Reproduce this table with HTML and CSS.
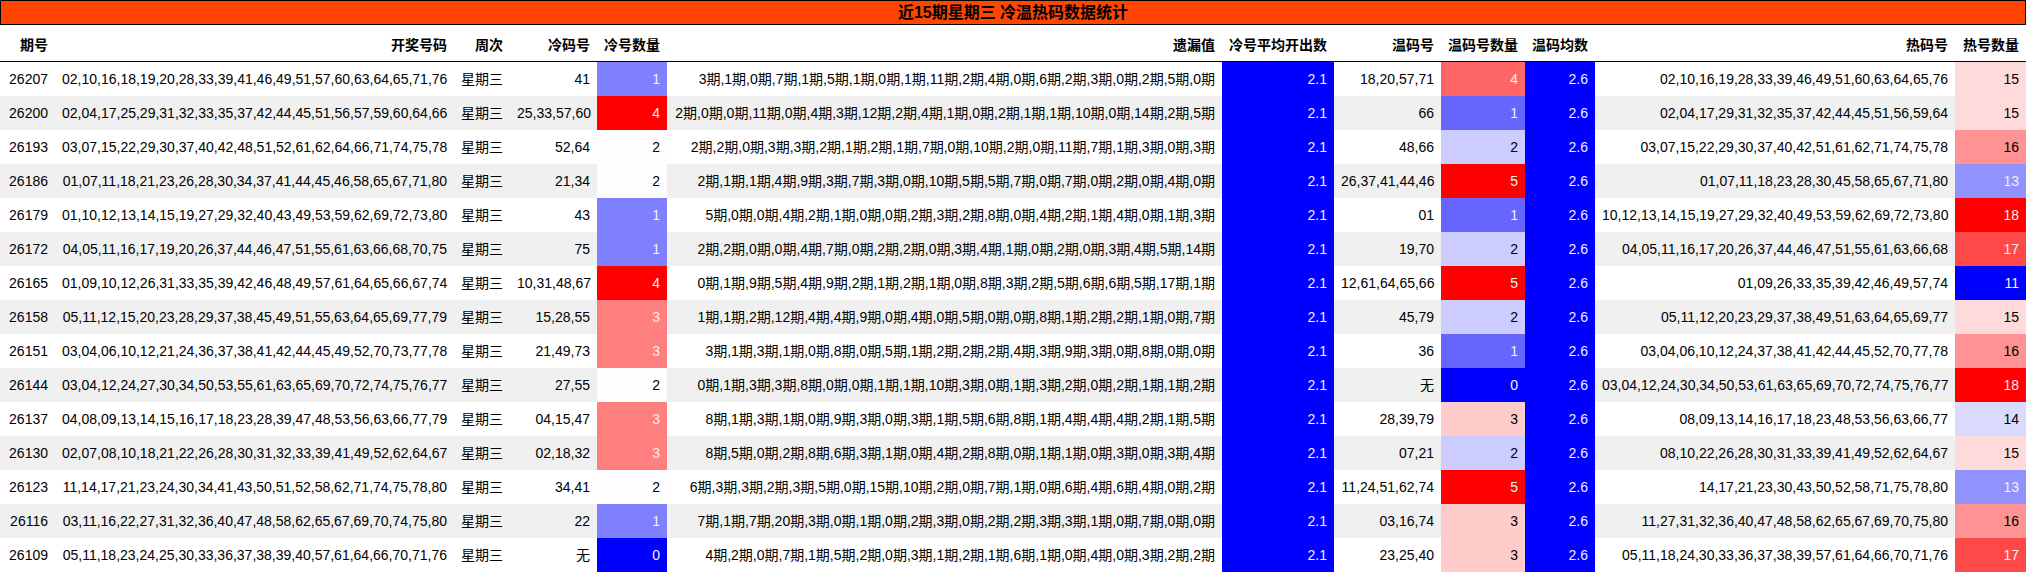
FILE: index.html
```html
<!DOCTYPE html>
<html lang="zh-CN">
<head>
<meta charset="utf-8">
<title>近15期星期三 冷温热码数据统计</title>
<link rel="stylesheet" href="styles.css">
</head>
<body>
<div class="report">
  <div class="title">近15期星期三 冷温热码数据统计</div>
  <table class="stats">
    <colgroup>
      <col class="w-issue"><col class="w-draw"><col class="w-week"><col class="w-cold"><col class="w-num70">
      <col class="w-miss"><col class="w-avg"><col class="w-warm"><col class="w-warmcnt"><col class="w-num70">
      <col class="w-hot"><col class="w-hotcnt">
    </colgroup>
    <thead>
      <tr>
        <th>期号</th><th>开奖号码</th><th>周次</th><th>冷码号</th><th>冷号数量</th><th>遗漏值</th>
        <th>冷号平均开出数</th><th>温码号</th><th>温码号数量</th><th>温码均数</th><th>热码号</th><th>热号数量</th>
      </tr>
    </thead>
    <tbody>
      <tr>
        <td>26207</td><td>02,10,16,18,19,20,28,33,39,41,46,49,51,57,60,63,64,65,71,76</td><td>星期三</td><td>41</td>
        <td class="lt" style="background:#8080ff">1</td>
        <td>3期,1期,0期,7期,1期,5期,1期,0期,1期,11期,2期,4期,0期,6期,2期,3期,0期,2期,5期,0期</td>
        <td class="lt" style="background:#0000ff">2.1</td><td>18,20,57,71</td>
        <td class="lt" style="background:#ff6666">4</td>
        <td class="lt" style="background:#0000ff">2.6</td>
        <td>02,10,16,19,28,33,39,46,49,51,60,63,64,65,76</td>
        <td style="background:#ffdada">15</td>
      </tr>
      <tr>
        <td>26200</td><td>02,04,17,25,29,31,32,33,35,37,42,44,45,51,56,57,59,60,64,66</td><td>星期三</td><td>25,33,57,60</td>
        <td class="lt" style="background:#ff0000">4</td>
        <td>2期,0期,0期,11期,0期,4期,3期,12期,2期,4期,1期,0期,2期,1期,1期,10期,0期,14期,2期,5期</td>
        <td class="lt" style="background:#0000ff">2.1</td><td>66</td>
        <td class="lt" style="background:#6666ff">1</td>
        <td class="lt" style="background:#0000ff">2.6</td>
        <td>02,04,17,29,31,32,35,37,42,44,45,51,56,59,64</td>
        <td style="background:#ffdada">15</td>
      </tr>
      <tr>
        <td>26193</td><td>03,07,15,22,29,30,37,40,42,48,51,52,61,62,64,66,71,74,75,78</td><td>星期三</td><td>52,64</td>
        <td style="background:#fffefe">2</td>
        <td>2期,2期,0期,3期,3期,2期,1期,2期,1期,7期,0期,10期,2期,0期,11期,7期,1期,3期,0期,3期</td>
        <td class="lt" style="background:#0000ff">2.1</td><td>48,66</td>
        <td style="background:#ccccff">2</td>
        <td class="lt" style="background:#0000ff">2.6</td>
        <td>03,07,15,22,29,30,37,40,42,51,61,62,71,74,75,78</td>
        <td style="background:#ff9292">16</td>
      </tr>
      <tr>
        <td>26186</td><td>01,07,11,18,21,23,26,28,30,34,37,41,44,45,46,58,65,67,71,80</td><td>星期三</td><td>21,34</td>
        <td style="background:#fffefe">2</td>
        <td>2期,1期,1期,4期,9期,3期,7期,3期,0期,10期,5期,5期,7期,0期,7期,0期,2期,0期,4期,0期</td>
        <td class="lt" style="background:#0000ff">2.1</td><td>26,37,41,44,46</td>
        <td class="lt" style="background:#ff0000">5</td>
        <td class="lt" style="background:#0000ff">2.6</td>
        <td>01,07,11,18,23,28,30,45,58,65,67,71,80</td>
        <td class="lt" style="background:#9292ff">13</td>
      </tr>
      <tr>
        <td>26179</td><td>01,10,12,13,14,15,19,27,29,32,40,43,49,53,59,62,69,72,73,80</td><td>星期三</td><td>43</td>
        <td class="lt" style="background:#8080ff">1</td>
        <td>5期,0期,0期,4期,2期,1期,0期,0期,2期,3期,2期,8期,0期,4期,2期,1期,4期,0期,1期,3期</td>
        <td class="lt" style="background:#0000ff">2.1</td><td>01</td>
        <td class="lt" style="background:#6666ff">1</td>
        <td class="lt" style="background:#0000ff">2.6</td>
        <td>10,12,13,14,15,19,27,29,32,40,49,53,59,62,69,72,73,80</td>
        <td class="lt" style="background:#ff0000">18</td>
      </tr>
      <tr>
        <td>26172</td><td>04,05,11,16,17,19,20,26,37,44,46,47,51,55,61,63,66,68,70,75</td><td>星期三</td><td>75</td>
        <td class="lt" style="background:#8080ff">1</td>
        <td>2期,2期,0期,0期,4期,7期,0期,2期,2期,0期,3期,4期,1期,0期,2期,0期,3期,4期,5期,14期</td>
        <td class="lt" style="background:#0000ff">2.1</td><td>19,70</td>
        <td style="background:#ccccff">2</td>
        <td class="lt" style="background:#0000ff">2.6</td>
        <td>04,05,11,16,17,20,26,37,44,46,47,51,55,61,63,66,68</td>
        <td class="lt" style="background:#ff4848">17</td>
      </tr>
      <tr>
        <td>26165</td><td>01,09,10,12,26,31,33,35,39,42,46,48,49,57,61,64,65,66,67,74</td><td>星期三</td><td>10,31,48,67</td>
        <td class="lt" style="background:#ff0000">4</td>
        <td>0期,1期,9期,5期,4期,9期,2期,1期,2期,1期,0期,8期,3期,2期,5期,6期,6期,5期,17期,1期</td>
        <td class="lt" style="background:#0000ff">2.1</td><td>12,61,64,65,66</td>
        <td class="lt" style="background:#ff0000">5</td>
        <td class="lt" style="background:#0000ff">2.6</td>
        <td>01,09,26,33,35,39,42,46,49,57,74</td>
        <td class="lt" style="background:#0000ff">11</td>
      </tr>
      <tr>
        <td>26158</td><td>05,11,12,15,20,23,28,29,37,38,45,49,51,55,63,64,65,69,77,79</td><td>星期三</td><td>15,28,55</td>
        <td class="lt" style="background:#ff7e7e">3</td>
        <td>1期,1期,2期,12期,4期,4期,9期,0期,4期,0期,5期,0期,0期,8期,1期,2期,2期,1期,0期,7期</td>
        <td class="lt" style="background:#0000ff">2.1</td><td>45,79</td>
        <td style="background:#ccccff">2</td>
        <td class="lt" style="background:#0000ff">2.6</td>
        <td>05,11,12,20,23,29,37,38,49,51,63,64,65,69,77</td>
        <td style="background:#ffdada">15</td>
      </tr>
      <tr>
        <td>26151</td><td>03,04,06,10,12,21,24,36,37,38,41,42,44,45,49,52,70,73,77,78</td><td>星期三</td><td>21,49,73</td>
        <td class="lt" style="background:#ff7e7e">3</td>
        <td>3期,1期,3期,1期,0期,8期,0期,5期,1期,2期,2期,2期,4期,3期,9期,3期,0期,8期,0期,0期</td>
        <td class="lt" style="background:#0000ff">2.1</td><td>36</td>
        <td class="lt" style="background:#6666ff">1</td>
        <td class="lt" style="background:#0000ff">2.6</td>
        <td>03,04,06,10,12,24,37,38,41,42,44,45,52,70,77,78</td>
        <td style="background:#ff9292">16</td>
      </tr>
      <tr>
        <td>26144</td><td>03,04,12,24,27,30,34,50,53,55,61,63,65,69,70,72,74,75,76,77</td><td>星期三</td><td>27,55</td>
        <td style="background:#fffefe">2</td>
        <td>0期,1期,3期,3期,8期,0期,0期,1期,1期,10期,3期,0期,1期,3期,2期,0期,2期,1期,1期,2期</td>
        <td class="lt" style="background:#0000ff">2.1</td><td>无</td>
        <td class="lt" style="background:#0000ff">0</td>
        <td class="lt" style="background:#0000ff">2.6</td>
        <td>03,04,12,24,30,34,50,53,61,63,65,69,70,72,74,75,76,77</td>
        <td class="lt" style="background:#ff0000">18</td>
      </tr>
      <tr>
        <td>26137</td><td>04,08,09,13,14,15,16,17,18,23,28,39,47,48,53,56,63,66,77,79</td><td>星期三</td><td>04,15,47</td>
        <td class="lt" style="background:#ff7e7e">3</td>
        <td>8期,1期,3期,1期,0期,9期,3期,0期,3期,1期,5期,6期,8期,1期,4期,4期,4期,2期,1期,5期</td>
        <td class="lt" style="background:#0000ff">2.1</td><td>28,39,79</td>
        <td style="background:#ffcccc">3</td>
        <td class="lt" style="background:#0000ff">2.6</td>
        <td>08,09,13,14,16,17,18,23,48,53,56,63,66,77</td>
        <td style="background:#dadaff">14</td>
      </tr>
      <tr>
        <td>26130</td><td>02,07,08,10,18,21,22,26,28,30,31,32,33,39,41,49,52,62,64,67</td><td>星期三</td><td>02,18,32</td>
        <td class="lt" style="background:#ff7e7e">3</td>
        <td>8期,5期,0期,2期,8期,6期,3期,1期,0期,4期,2期,8期,0期,1期,1期,0期,3期,0期,3期,4期</td>
        <td class="lt" style="background:#0000ff">2.1</td><td>07,21</td>
        <td style="background:#ccccff">2</td>
        <td class="lt" style="background:#0000ff">2.6</td>
        <td>08,10,22,26,28,30,31,33,39,41,49,52,62,64,67</td>
        <td style="background:#ffdada">15</td>
      </tr>
      <tr>
        <td>26123</td><td>11,14,17,21,23,24,30,34,41,43,50,51,52,58,62,71,74,75,78,80</td><td>星期三</td><td>34,41</td>
        <td style="background:#fffefe">2</td>
        <td>6期,3期,3期,2期,3期,5期,0期,15期,10期,2期,0期,7期,1期,0期,6期,4期,6期,4期,0期,2期</td>
        <td class="lt" style="background:#0000ff">2.1</td><td>11,24,51,62,74</td>
        <td class="lt" style="background:#ff0000">5</td>
        <td class="lt" style="background:#0000ff">2.6</td>
        <td>14,17,21,23,30,43,50,52,58,71,75,78,80</td>
        <td class="lt" style="background:#9292ff">13</td>
      </tr>
      <tr>
        <td>26116</td><td>03,11,16,22,27,31,32,36,40,47,48,58,62,65,67,69,70,74,75,80</td><td>星期三</td><td>22</td>
        <td class="lt" style="background:#8080ff">1</td>
        <td>7期,1期,7期,20期,3期,0期,1期,0期,2期,3期,0期,2期,2期,3期,3期,1期,0期,7期,0期,0期</td>
        <td class="lt" style="background:#0000ff">2.1</td><td>03,16,74</td>
        <td style="background:#ffcccc">3</td>
        <td class="lt" style="background:#0000ff">2.6</td>
        <td>11,27,31,32,36,40,47,48,58,62,65,67,69,70,75,80</td>
        <td style="background:#ff9292">16</td>
      </tr>
      <tr>
        <td>26109</td><td>05,11,18,23,24,25,30,33,36,37,38,39,40,57,61,64,66,70,71,76</td><td>星期三</td><td>无</td>
        <td class="lt" style="background:#0000ff">0</td>
        <td>4期,2期,0期,7期,1期,5期,2期,0期,3期,1期,2期,1期,6期,1期,0期,4期,0期,3期,2期,2期</td>
        <td class="lt" style="background:#0000ff">2.1</td><td>23,25,40</td>
        <td style="background:#ffcccc">3</td>
        <td class="lt" style="background:#0000ff">2.6</td>
        <td>05,11,18,24,30,33,36,37,38,39,57,61,64,66,70,71,76</td>
        <td class="lt" style="background:#ff4848">17</td>
      </tr>
    </tbody>
  </table>
</div>
</body>
</html>
```
FILE: styles.css
```css
html, body {
  margin: 0;
  padding: 0;
  background: #ffffff;
}

body {
  font-family: "Liberation Sans", "Noto Sans CJK SC", sans-serif;
  font-size: 14px;
  color: #000000;
}

.report {
  width: 2026px;
}

.title {
  box-sizing: border-box;
  width: 2026px;
  height: 25px;
  border: 1px solid #000000;
  background: #ff4500;
  font-size: 16px;
  font-weight: bold;
  line-height: 23px;
  text-align: center;
  color: #000000;
}

.stats {
  width: 2026px;
  table-layout: fixed;
  border-collapse: collapse;
  border-spacing: 0;
}

.w-issue { width: 55px; }
.w-draw { width: 399px; }
.w-week { width: 56px; }
.w-cold { width: 87px; }
.w-num70 { width: 70px; }
.w-miss { width: 555px; }
.w-avg { width: 112px; }
.w-warm { width: 107px; }
.w-warmcnt { width: 84px; }
.w-hot { width: 360px; }
.w-hotcnt { width: 71px; }

.stats thead tr {
  border-bottom: 1px solid #000000;
}

.stats th {
  padding: 10px 7px 6px 7px;
  line-height: 20px;
  font-weight: bold;
  text-align: right;
  white-space: nowrap;
}

.stats td {
  padding: 7px 7px;
  line-height: 20px;
  text-align: right;
  white-space: nowrap;
}

.stats tbody tr:nth-child(even) {
  background: #f0f0f0;
}

.stats td.lt {
  color: #f1f1f1;
}
```
